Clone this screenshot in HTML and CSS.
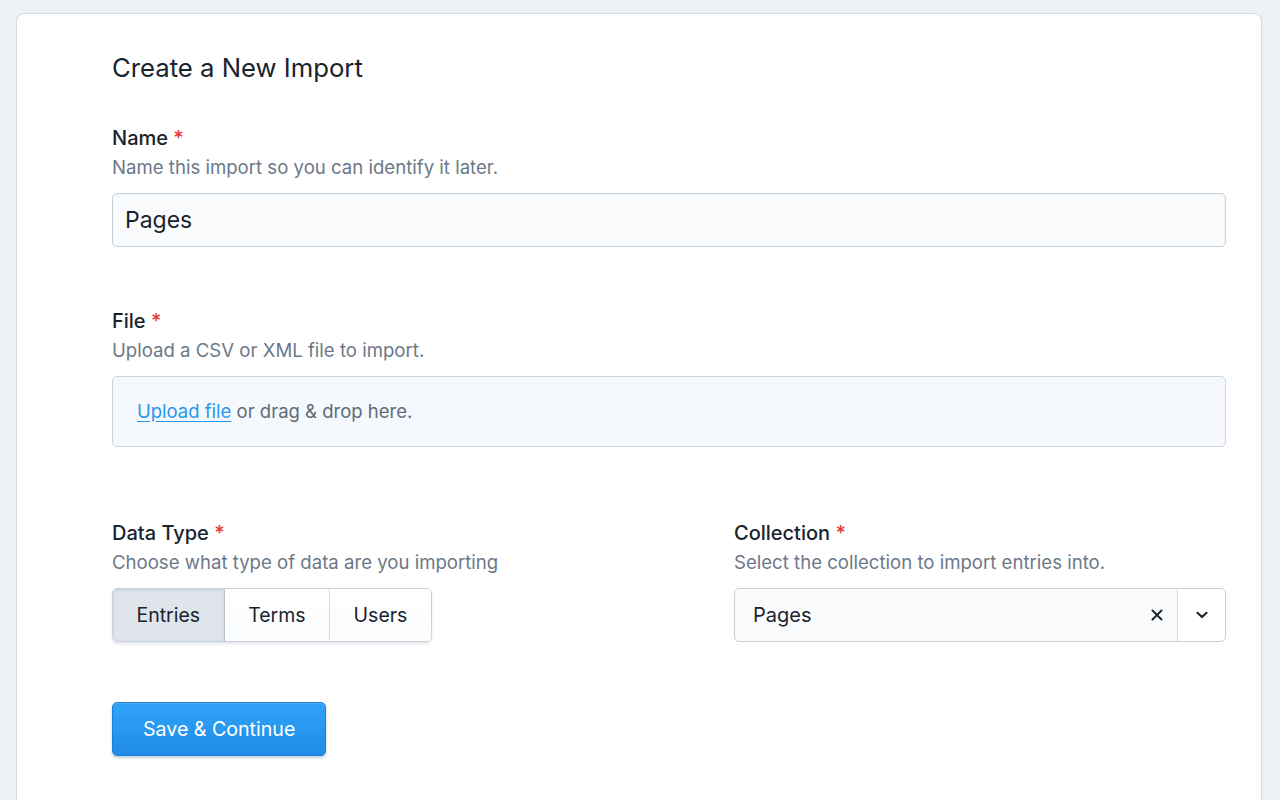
FILE: index.html
```html
<!DOCTYPE html>
<html lang="en">
<head>
<meta charset="utf-8">
<title>Create a New Import</title>
<link rel="stylesheet" href="styles.css">
</head>
<body>
<main class="card">
  <h1 class="title">Create a New Import</h1>

  <section class="field">
    <div class="label">Name <span class="req">*</span></div>
    <div class="help">Name this import so you can identify it later.</div>
    <div class="input">Pages</div>
  </section>

  <section class="field field-file">
    <div class="label">File <span class="req">*</span></div>
    <div class="help">Upload a CSV or XML file to import.</div>
    <div class="dropzone"><a class="link" href="#">Upload file</a> or drag &amp; drop here.</div>
  </section>

  <div class="row">
    <section class="field">
      <div class="label">Data Type <span class="req">*</span></div>
      <div class="help">Choose what type of data are you importing</div>
      <div class="btn-group">
        <span class="seg active">Entries</span>
        <span class="seg">Terms</span>
        <span class="seg">Users</span>
      </div>
    </section>
    <section class="field">
      <div class="label">Collection <span class="req">*</span></div>
      <div class="help">Select the collection to import entries into.</div>
      <div class="select">
        <span class="select-value">Pages</span>
        <span class="select-clear">
          <svg width="12" height="12" viewBox="0 0 12 12"><path d="M1.5 1.5 L10.5 10.5 M10.5 1.5 L1.5 10.5" stroke="#1b2733" stroke-width="2" stroke-linecap="round"/></svg>
        </span>
        <span class="select-toggle">
          <svg width="12" height="8" viewBox="0 0 12 8"><path d="M1.5 1.8 L6 6 L10.5 1.8" fill="none" stroke="#1b2733" stroke-width="2.2" stroke-linecap="round" stroke-linejoin="round"/></svg>
        </span>
      </div>
    </section>
  </div>

  <div class="actions">
    <button class="btn-primary" type="button">Save &amp; Continue</button>
  </div>
</main>
</body>
</html>
```

FILE: styles.css
```css
* { box-sizing: border-box; }
html, body { margin: 0; height: 100%; }
body {
  background: #eef1f6;
  font-family: Inter, "Noto Sans", sans-serif;
  color: #1b2733;
  padding: 14px 19px 0 17px;
  overflow: hidden;
}
.card {
  background: #fff;
  border-radius: 7px;
  box-shadow: 0 0 0 1px rgba(200, 208, 218, 0.6), 0 1px 3px rgba(40, 60, 90, 0.12);
  padding: 39px 35px 60px 95px;
  min-height: 820px;
}
.title {
  margin: 0 0 43px;
  font-size: 25.7px;
  font-weight: 400;
  line-height: 30px;
  color: #19232e;
}
.field { display: flex; flex-direction: column; }
.label {
  font-size: 20px;
  font-weight: 500;
  line-height: 24px;
  color: #19232e;
}
.req { color: #e53935; }
.help {
  font-size: 18.6px;
  line-height: 24px;
  margin-top: 5px;
  color: #6c7887;
}
.input {
  margin-top: 14px;
  height: 54px;
  border: 1px solid #c7cfd9;
  border-radius: 5px;
  background: #fafbfd;
  font-size: 23px;
  line-height: 52px;
  padding: 0 12px;
  color: #19232e;
  box-shadow: inset 0 1px 2px rgba(40, 60, 90, 0.05);
}
.field-file { margin-top: 62px; }
.dropzone {
  margin-top: 14px;
  height: 71px;
  border: 1px solid #cdd4de;
  border-radius: 5px;
  background: #f5f8fc;
  font-size: 18.5px;
  line-height: 69px;
  padding: 0 24px;
  color: #5f6b79;
}
.link { color: #2599f0; text-decoration: underline; text-underline-offset: 3px; }
.row {
  margin-top: 74px;
  display: grid;
  grid-template-columns: 1fr 492px;
  column-gap: 130px;
}
.btn-group {
  margin-top: 14px;
  display: inline-flex;
  align-self: flex-start;
  height: 54px;
  border: 1px solid #c9d1db;
  border-radius: 5px;
  box-shadow: 0 2px 3px rgba(40, 60, 90, 0.12);
  overflow: hidden;
}
.seg {
  font-size: 19.5px;
  line-height: 52px;
  padding: 0 23.5px;
  background: linear-gradient(#fff, #fbfcfd);
  color: #19232e;
  border-left: 1px solid #d3d9e1;
}
.seg:first-child { border-left: none; }
.seg.active {
  background: #dfe5eb;
  box-shadow: inset 0 1px 3px rgba(40, 60, 90, 0.15);
  border-right: 1px solid #b8c2ce;
}
.seg.active + .seg { border-left: none; }
.select {
  margin-top: 14px;
  height: 54px;
  display: flex;
  align-items: stretch;
  border: 1px solid #c7cfd9;
  border-radius: 5px;
  background: #fafbfd;
}
.select-value {
  flex: 1;
  font-size: 20px;
  line-height: 52px;
  padding-left: 18px;
  color: #19232e;
}
.select-clear {
  width: 40px;
  display: flex;
  align-items: center;
  justify-content: center;
}
.select-toggle {
  width: 48px;
  display: flex;
  align-items: center;
  justify-content: center;
  border-left: 1px solid #d3d9e1;
  background: #fff;
  border-radius: 0 5px 5px 0;
}
.actions { margin-top: 60px; }
.btn-primary {
  height: 54px;
  padding: 0 30px;
  font-family: inherit;
  font-size: 19.6px;
  color: #fff;
  background: linear-gradient(#30a3f8, #1f8ce8);
  border: 1px solid #1c80d9;
  border-radius: 5px;
  box-shadow: 0 2px 3px rgba(20, 60, 110, 0.25), inset 0 1px 0 rgba(255,255,255,0.15);
  cursor: pointer;
}
```
